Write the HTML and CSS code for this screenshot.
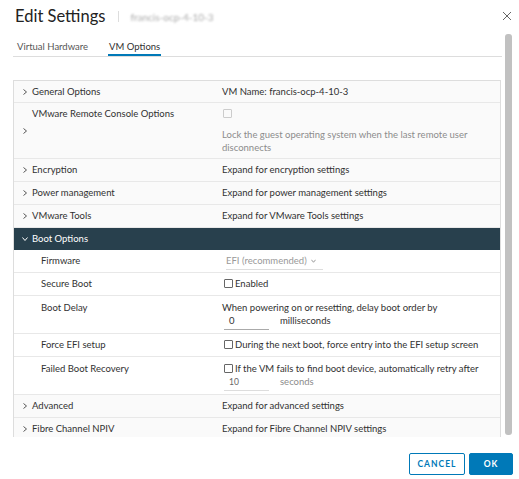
FILE: index.html
```html
<!DOCTYPE html>
<html lang="en">
<head>
    <meta charset="UTF-8">
    <meta name="viewport" content="width=device-width, initial-scale=1.0">
    <title>Edit Settings</title>
    <link rel="stylesheet" href="styles.css">
</head>
<body>
    <div class="modal">
        <div class="modal-head">
            <h1>Edit Settings</h1>
            <span class="divider"></span>
            <span class="vm-name">francis-ocp-4-10-3</span>
            <svg class="close" width="10" height="10" viewBox="0 0 10 10">
                <path d="M1 1 L9 9 M9 1 L1 9" stroke="#666" stroke-width="1" fill="none"/>
            </svg>
        </div>

        <div class="modal-body">
            <div class="scroll-area">
                <div class="tabs">
                    <span class="tab">Virtual Hardware</span>
                    <span class="tab active">VM Options</span>
                </div>

                <div class="stack">
                    <div class="row head">
                        <div class="label"><svg class="caret" viewBox="0 0 4 6"><path d="M0.5 0.5 L3.5 3 L0.5 5.5" /></svg><span>General Options</span></div>
                        <div class="value">VM Name: francis-ocp-4-10-3</div>
                    </div>
                    <div class="row head tall">
                        <div class="label"><svg class="caret" viewBox="0 0 4 6"><path d="M0.5 0.5 L3.5 3 L0.5 5.5" /></svg><span>VMware Remote Console Options</span></div>
                        <div class="value">
                            <div class="check-line"><span class="box disabled"></span></div>
                            <p class="muted">Lock the guest operating system when the last remote user disconnects</p>
                        </div>
                    </div>
                    <div class="row head">
                        <div class="label"><svg class="caret" viewBox="0 0 4 6"><path d="M0.5 0.5 L3.5 3 L0.5 5.5" /></svg><span>Encryption</span></div>
                        <div class="value">Expand for encryption settings</div>
                    </div>
                    <div class="row head">
                        <div class="label"><svg class="caret" viewBox="0 0 4 6"><path d="M0.5 0.5 L3.5 3 L0.5 5.5" /></svg><span>Power management</span></div>
                        <div class="value">Expand for power management settings</div>
                    </div>
                    <div class="row head">
                        <div class="label"><svg class="caret" viewBox="0 0 4 6"><path d="M0.5 0.5 L3.5 3 L0.5 5.5" /></svg><span>VMware Tools</span></div>
                        <div class="value">Expand for VMware Tools settings</div>
                    </div>
                    <div class="row head open">
                        <div class="label"><svg class="caret" viewBox="0 0 6 4"><path d="M0.5 0.5 L3 3.5 L5.5 0.5" /></svg><span>Boot Options</span></div>
                        <div class="value"></div>
                    </div>
                    <div class="row child">
                        <div class="label"><span>Firmware</span></div>
                        <div class="value">
                            <span class="select">EFI (recommended)
                                <svg class="select-caret" viewBox="0 0 6 4"><path d="M0.5 0.5 L3 3.5 L5.5 0.5" /></svg>
                            </span>
                        </div>
                    </div>
                    <div class="row child">
                        <div class="label"><span>Secure Boot</span></div>
                        <div class="value"><span class="box"></span>Enabled</div>
                    </div>
                    <div class="row child double">
                        <div class="label"><span>Boot Delay</span></div>
                        <div class="value">
                            <div>When powering on or resetting, delay boot order by</div>
                            <div class="input-line"><span class="input">0</span><span>milliseconds</span></div>
                        </div>
                    </div>
                    <div class="row child">
                        <div class="label"><span>Force EFI setup</span></div>
                        <div class="value"><span class="box"></span>During the next boot, force entry into the EFI setup screen</div>
                    </div>
                    <div class="row child double">
                        <div class="label"><span>Failed Boot Recovery</span></div>
                        <div class="value">
                            <div><span class="box"></span>If the VM fails to find boot device, automatically retry after</div>
                            <div class="input-line"><span class="input dim">10</span><span class="muted">seconds</span></div>
                        </div>
                    </div>
                    <div class="row head">
                        <div class="label"><svg class="caret" viewBox="0 0 4 6"><path d="M0.5 0.5 L3.5 3 L0.5 5.5" /></svg><span>Advanced</span></div>
                        <div class="value">Expand for advanced settings</div>
                    </div>
                    <div class="row head">
                        <div class="label"><svg class="caret" viewBox="0 0 4 6"><path d="M0.5 0.5 L3.5 3 L0.5 5.5" /></svg><span>Fibre Channel NPIV</span></div>
                        <div class="value">Expand for Fibre Channel NPIV settings</div>
                    </div>
                </div>
            </div>
            <div class="scrollbar"><div class="thumb"></div></div>
        </div>

        <div class="modal-foot">
            <button class="btn btn-outline">Cancel</button>
            <button class="btn btn-primary">OK</button>
        </div>
    </div>
</body>
</html>
```

FILE: styles.css
```css
body {
    margin: 0;
    background: #fff;
    font-family: Lato, "Open Sans", sans-serif;
    color: #313131;
}

.modal {
    width: 519px;
    height: 479px;
    display: flex;
    flex-direction: column;
}

/* title bar */
.modal-head {
    height: 33px;
    flex-shrink: 0;
    display: flex;
    align-items: center;
    padding: 0 7px 0 15px;
}
.modal-head h1 {
    margin: 0;
    font-size: 16.5px;
    font-weight: 400;
    color: #222;
    padding-bottom: 2px;
}
.divider {
    width: 1px;
    height: 11px;
    background: #ddd;
    margin: 0 11px 0 13px;
}
.vm-name {
    font-size: 10px;
    color: #aaa;
    filter: blur(1.3px);
}
.close {
    margin-left: auto;
    width: 10px;
    height: 10px;
    margin-bottom: 1px;
}

/* scrolling content */
.modal-body {
    height: 404px;
    flex-shrink: 0;
    display: flex;
    padding-left: 13px;
    overflow: hidden;
}
.scroll-area {
    width: 489px;
    height: 404px;
    overflow: hidden;
}
.scrollbar {
    width: 7px;
    margin-left: 3px;
    padding-top: 1px;
}
.thumb {
    height: 401px;
    background: #c1c1c1;
    border-radius: 3px;
}

.tabs {
    display: flex;
    gap: 19px;
    padding: 6px 0 0 3px;
    border-bottom: 1px solid #ddd;
    height: 17px;
}
.tab {
    font-size: 9.5px;
    color: #565656;
    padding: 0 1px;
    line-height: 15px;
}
.tab.active {
    color: #313131;
    border-bottom: 2px solid #0079b8;
}

/* stack view */
.stack {
    margin-top: 23px;
    border: 1px solid #ddd;
    border-bottom: none;
    width: 486px;
}
.row {
    display: flex;
    font-size: 9.5px;
    line-height: 12px;
    border-bottom: 1px solid #e8e8e8;
    background: #fafafa;
    box-sizing: border-box;
}
.row.child {
    background: #fff;
    height: 23px;
}
.label {
    width: 208px;
    flex-shrink: 0;
    display: flex;
    padding: 5px 0 5px 9px;
    box-sizing: border-box;
}
.label span {
    padding-left: 5px;
}
.child .label {
    padding-left: 22px;
}
.value {
    flex: 1;
    padding: 5px 14px 5px 0;
}
.caret {
    width: 4px;
    height: 6px;
    align-self: center;
    fill: none;
    stroke: #555;
    stroke-width: 1;
}
.row.head {
    height: 23px;
}
.row.head:first-child {
    height: 22px;
}
.row.head.tall {
    height: 56px;
}
.row.child.double {
    height: 38px;
    padding-top: 1px;
}

.row.head.open {
    background: #28404d;
    color: #fff;
    height: 22px;
    border-bottom-color: #28404d;
}
.open .caret {
    width: 6px;
    height: 4px;
    stroke: #fff;
    margin-left: -1px;
}
.open .label span {
    padding-left: 4px;
}

.check-line {
    height: 12px;
    margin-bottom: 8px;
}
.value p {
    margin: 0;
    line-height: 13px;
}
.muted {
    color: #8c8c8c;
}

.box {
    display: inline-block;
    width: 7px;
    height: 7px;
    border: 1px solid #666;
    border-radius: 1px;
    vertical-align: -1px;
    margin: 0 2px 0 2px;
}
.box.disabled {
    border-color: #ccc;
    margin-left: 1px;
}

.select {
    display: inline-flex;
    align-items: center;
    width: 97px;
    margin-left: 4px;
    color: #999;
    border-bottom: 1px solid #ddd;
    padding-bottom: 2px;
}
.select-caret {
    width: 5px;
    height: 4px;
    margin-left: 4px;
    fill: none;
    stroke: #888;
    stroke-width: 1;
}

.input-line {
    display: flex;
    align-items: flex-end;
    height: 16px;
}
.input {
    width: 40px;
    border-bottom: 1px solid #aaa;
    padding: 0 0 2px 5px;
    margin: 0 11px 0 2px;
    line-height: 12px;
}
.input.dim {
    color: #666;
    font-size: 8.5px;
    border-bottom-color: #ddd;
}
.input-line > span:last-child {
    padding-bottom: 3px;
}

/* footer buttons */
.modal-foot {
    display: flex;
    justify-content: flex-end;
    gap: 4px;
    padding: 16px 6px 0 0;
    height: 42px;
    box-sizing: border-box;
    flex-shrink: 0;
}
.btn {
    height: 22px;
    font-family: Lato, sans-serif;
    font-size: 8.5px;
    font-weight: 700;
    letter-spacing: 1px;
    text-transform: uppercase;
    border-radius: 2px;
    border: 1px solid #0079b8;
    padding: 0;
}
.btn-outline {
    width: 56px;
    background: #fff;
    color: #0079b8;
}
.btn-primary {
    width: 44px;
    background: #0079b8;
    color: #fff;
}
```
